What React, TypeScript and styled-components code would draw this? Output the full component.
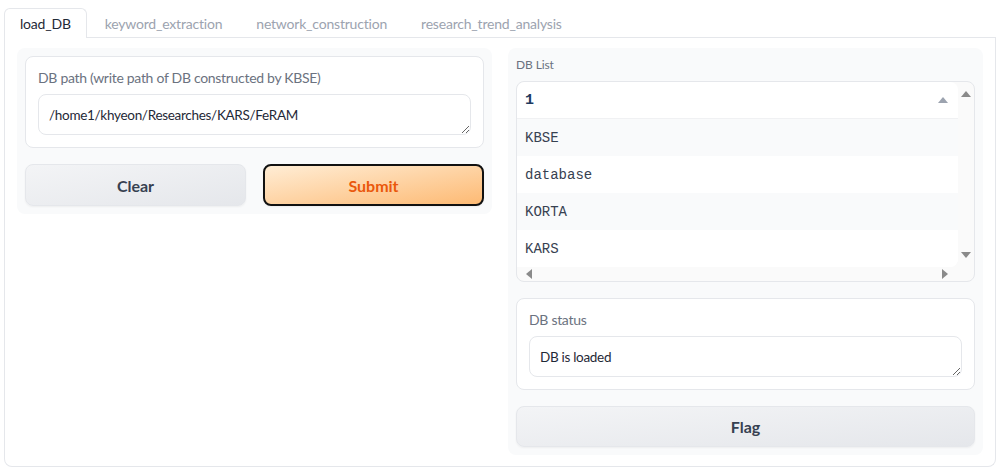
import React from 'react';
import styled, { createGlobalStyle } from 'styled-components';

const GlobalStyle = createGlobalStyle`
  html, body {
    margin: 0;
    padding: 0;
    background: #ffffff;
    font-family: Lato, 'Open Sans', sans-serif;
  }
  * { box-sizing: border-box; }
`;

const Page = styled.div`
  padding: 8px 5px 0 4px;
  width: 1001px;
`;

const TabBar = styled.div`
  display: flex;
  align-items: flex-end;
  height: 30px;
  border-bottom: 1px solid #e5e7eb;
  gap: 2px;
`;

const Tab = styled.div<{ $active?: boolean }>`
  padding: 0 15px;
  display: flex;
  align-items: center;
  font-size: 14px;
  letter-spacing: -0.2px;
  color: ${p => (p.$active ? '#1f2937' : '#9ca3af')};
  background: #fff;
  border: 1px solid ${p => (p.$active ? '#e5e7eb' : 'transparent')};
  border-bottom: none;
  border-radius: 6px 6px 0 0;
  margin-bottom: ${p => (p.$active ? '-1px' : '0')};
  height: ${p => (p.$active ? '30px' : '29px')};
`;

const TabBody = styled.div`
  border: 1px solid #e5e7eb;
  border-top: none;
  border-radius: 0 0 8px 8px;
  padding: 10px 12px;
  display: grid;
  grid-template-columns: 1fr 1fr;
  gap: 16px;
  align-items: start;
  height: 429px;
`;

const Panel = styled.div`
  background: #f9fafb;
  border-radius: 8px;
  padding: 8px;
  display: flex;
  flex-direction: column;
  gap: 16px;
`;

const Card = styled.div`
  background: #fff;
  border: 1px solid #e5e7eb;
  border-radius: 8px;
  padding: 12px;
  display: flex;
  flex-direction: column;
  gap: 8px;
`;

const Field = styled.div`
  display: flex;
  flex-direction: column;
  gap: 8px;
`;

const Label = styled.div<{ $small?: boolean }>`
  font-size: ${p => (p.$small ? '12px' : '14px')};
  letter-spacing: ${p => (p.$small ? '-0.1px' : '-0.3px')};
  color: #6b7280;
  line-height: 17px;
`;

const TextBox = styled.textarea`
  width: 100%;
  height: 41px;
  border: 1px solid #e5e7eb;
  border-radius: 8px;
  padding: 10px 10px;
  font-family: Lato, 'Open Sans', sans-serif;
  font-size: 13.5px;
  letter-spacing: -0.3px;
  line-height: 20px;
  color: #1f2937;
  background: #fff;
  outline: none;
  display: block;
  overflow: hidden;
`;

const ButtonRow = styled.div`
  display: grid;
  grid-template-columns: 1fr 1fr;
  gap: 17px;
`;

const Button = styled.button<{ $primary?: boolean; $h?: number }>`
  height: ${p => p.$h ?? 42}px;
  border-radius: 8px;
  font-family: Lato, 'Open Sans', sans-serif;
  font-size: 16px;
  font-weight: 700;
  cursor: pointer;
  color: ${p => (p.$primary ? '#ea580c' : '#374151')};
  background: ${p =>
    p.$primary
      ? 'linear-gradient(to bottom right, #ffedd5, #fdba74)'
      : 'linear-gradient(to bottom right, #f3f4f6, #e5e7eb)'};
  border: ${p => (p.$primary ? '2px solid #111111' : '1px solid #e5e7eb')};
  box-shadow: 0 1px 2px rgba(0, 0, 0, 0.05);
`;

const Frame = styled.div`
  border: 1px solid #e5e7eb;
  border-radius: 8px;
  background: #fafafa;
  display: grid;
  grid-template-columns: 1fr 16px;
  grid-template-rows: 185px 14px;
  overflow: hidden;
`;

const Table = styled.div`
  background: #fff;
  border-radius: 8px 8px 8px 0;
  overflow: hidden;
  display: flex;
  flex-direction: column;
`;

const HeadRow = styled.div`
  height: 37px;
  flex: none;
  display: flex;
  align-items: center;
  justify-content: space-between;
  padding: 0 10px 0 8px;
  border-bottom: 1px solid #f0f1f3;
  font-family: 'Liberation Mono', 'DejaVu Sans Mono', monospace;
  font-size: 15px;
  font-weight: 700;
  color: #1e3a5f;
`;

const Row = styled.div<{ $odd?: boolean }>`
  height: 37px;
  flex: none;
  display: flex;
  align-items: center;
  padding: 0 8px;
  background: ${p => (p.$odd ? '#f9fafb' : '#fff')};
  font-family: 'Liberation Mono', 'DejaVu Sans Mono', monospace;
  font-size: 14px;
  color: #374151;
`;

const VBar = styled.div`
  display: flex;
  flex-direction: column;
  justify-content: space-between;
  align-items: center;
  padding: 8px 0 8px;
`;

const HBar = styled.div`
  display: flex;
  justify-content: space-between;
  align-items: center;
  padding: 0 9px 0 8px;
`;

const Arrow = ({ dir, color = '#8a8a8a' }: { dir: 'up' | 'down' | 'left' | 'right'; color?: string }) => {
  const pts = {
    up: '0,7 5,1 10,7',
    down: '0,1 5,7 10,1',
    left: '7,0 1,5 7,10',
    right: '1,0 7,5 1,10',
  }[dir];
  const vertical = dir === 'up' || dir === 'down';
  return (
    <svg width={vertical ? 10 : 8} height={vertical ? 8 : 10} viewBox={vertical ? '0 0 10 8' : '0 0 8 10'}>
      <polygon points={pts} fill={color} />
    </svg>
  );
};

const rows = ['KBSE', 'database', 'KORTA', 'KARS'];

export default function App() {
  return (
    <>
      <GlobalStyle />
      <Page>
        <TabBar>
          <Tab $active>load_DB</Tab>
          <Tab>keyword_extraction</Tab>
          <Tab>network_construction</Tab>
          <Tab>research_trend_analysis</Tab>
        </TabBar>
        <TabBody>
          <Panel>
            <Card>
              <Label>DB path (write path of DB constructed by KBSE)</Label>
              <TextBox readOnly defaultValue="/home1/khyeon/Researches/KARS/FeRAM" />
            </Card>
            <ButtonRow>
              <Button>Clear</Button>
              <Button $primary>Submit</Button>
            </ButtonRow>
          </Panel>
          <Panel>
            <Field>
              <Label $small>DB List</Label>
              <Frame>
                <Table>
                  <HeadRow>
                    <span>1</span>
                    <Arrow dir="up" color="#9ca3af" />
                  </HeadRow>
                  {rows.map((r, i) => (
                    <Row key={r} $odd={i % 2 === 0}>{r}</Row>
                  ))}
                </Table>
                <VBar>
                  <Arrow dir="up" />
                  <Arrow dir="down" />
                </VBar>
                <HBar>
                  <Arrow dir="left" />
                  <Arrow dir="right" />
                </HBar>
                <div />
              </Frame>
            </Field>
            <Card>
              <Label>DB status</Label>
              <TextBox readOnly defaultValue="DB is loaded" />
            </Card>
            <Button $h={41}>Flag</Button>
          </Panel>
        </TabBody>
      </Page>
    </>
  );
}
